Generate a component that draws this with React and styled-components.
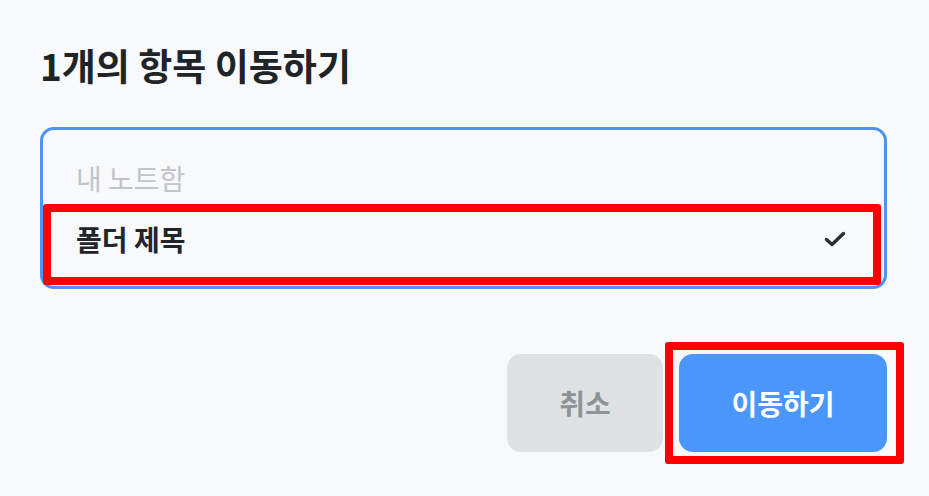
import styled, { createGlobalStyle } from "styled-components";

const GlobalStyle = createGlobalStyle`
  html, body {
    margin: 0;
    padding: 0;
    background: #f7f9fb;
  }
  body {
    font-family: "Noto Sans CJK KR", "Noto Sans", sans-serif;
  }
`;

const Page = styled.div`
  width: 929px;
  height: 496px;
  box-sizing: border-box;
  padding: 42px 42px 0 40px;
  background: #f7f9fb;
  overflow: hidden;
`;

const Title = styled.h2`
  margin: 0;
  font-size: 37px;
  line-height: 46px;
  font-weight: 700;
  color: #212427;
`;

const FolderList = styled.ul`
  list-style: none;
  margin: 39px 0 0;
  padding: 17px 0;
  border: 3px solid #4f93ef;
  border-radius: 14px;
`;

const FolderRow = styled.li`
  position: relative;
  display: flex;
  align-items: center;
  justify-content: space-between;
  height: 61px;
  padding: 0 38px 0 33px;
  font-size: 28px;
  font-weight: ${({ $selected }) => ($selected ? 700 : 400)};
  color: ${({ $selected }) => ($selected ? "#222529" : "#c1c4c8")};
`;

const Highlight = styled.span`
  position: absolute;
  pointer-events: none;
  border: 8px solid #ff0000;
  border-radius: 3px;
  top: ${({ $t }) => $t}px;
  right: ${({ $r }) => $r}px;
  bottom: ${({ $b }) => $b}px;
  left: ${({ $l }) => $l}px;
`;

const Footer = styled.div`
  display: flex;
  justify-content: flex-end;
  gap: 16px;
  margin-top: 65px;
`;

const Button = styled.button`
  position: relative;
  height: 98px;
  width: ${({ $primary }) => ($primary ? 208 : 156)}px;
  border: none;
  border-radius: 14px;
  font-family: inherit;
  font-size: 28px;
  font-weight: 700;
  background: ${({ $primary }) => ($primary ? "#4a96fa" : "#dfe2e5")};
  color: ${({ $primary }) => ($primary ? "#ffffff" : "#8f9398")};
  cursor: pointer;
`;

const Check = () => (
  <svg width="22" height="16" viewBox="0 0 22 16" fill="none">
    <path
      d="M2.5 8.5 L8 13.5 L19.5 2.5"
      stroke="#2b2e31"
      strokeWidth="3.4"
      strokeLinecap="round"
      strokeLinejoin="round"
    />
  </svg>
);

export default function App() {
  return (
    <Page>
      <GlobalStyle />
      <Title>1개의 항목 이동하기</Title>

      {/* Folder picker */}
      <FolderList>
        <FolderRow>내 노트함</FolderRow>
        <FolderRow $selected>
          폴더 제목
          <Check />
          <Highlight $t={-4} $r={3} $b={-16} $l={0} />
        </FolderRow>
      </FolderList>

      {/* Actions */}
      <Footer>
        <Button>취소</Button>
        <Button $primary>
          이동하기
          <Highlight $t={-12} $r={-17} $b={-12} $l={-14} />
        </Button>
      </Footer>
    </Page>
  );
}
